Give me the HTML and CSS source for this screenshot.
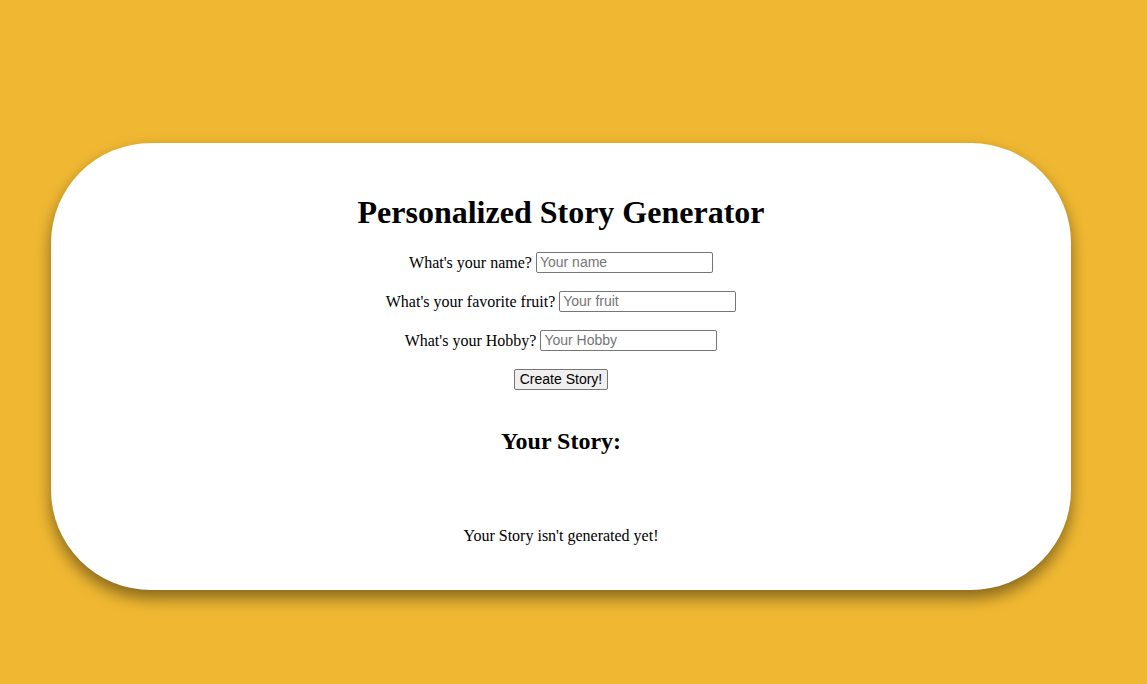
FILE: index.html
```html
<!DOCTYPE html>
<html>
<head>
<meta charset="utf-8">
<title>Personalized Story Generator</title>
<link rel="stylesheet" href="styles.css">
</head>
<body>
<div class="card">
  <h1 class="title">Personalized Story Generator</h1>
  <p class="row"><label>What's your name?</label> <input type="text" placeholder="Your name"></p>
  <p class="row"><label>What's your favorite fruit?</label> <input type="text" placeholder="Your fruit"></p>
  <p class="row row-last"><label>What's your Hobby?</label> <input type="text" placeholder="Your Hobby"></p>
  <p class="row"><button type="button">Create Story!</button></p>
  <h2 class="subtitle">Your Story:</h2>
  <p class="story">Your Story isn't generated yet!</p>
</div>
</body>
</html>
```

FILE: styles.css
```css
html, body {
  margin: 0;
  padding: 0;
}
body {
  background: #f0b832;
  font-family: "Liberation Serif", "Times New Roman", serif;
  font-size: 16px;
  color: #000;
  height: 684px;
  overflow: hidden;
}
.card {
  box-sizing: border-box;
  width: 1020px;
  height: 447px;
  margin: 143px 0 0 51px;
  background: #fff;
  border-radius: 100px;
  box-shadow: 0 8px 16px rgba(0, 0, 0, 0.45);
  padding-top: 51px;
  text-align: center;
}
.title {
  font-size: 32px;
  font-weight: bold;
  line-height: 37px;
  margin: 0 0 20px;
}
.row {
  margin: 0 0 16px;
  line-height: 23px;
  height: 23px;
}
.row-last {
  margin-bottom: 14px;
}
.row input {
  font-family: Arial, "Liberation Sans", sans-serif;
  font-size: 14px;
  width: 177px;
  height: 21px;
  box-sizing: border-box;
  border: 1px solid #767676;
  border-radius: 2px;
  padding: 1px 3px;
  vertical-align: 1px;
}
.row input::placeholder {
  color: #757575;
}
.row button {
  font-family: Arial, "Liberation Sans", sans-serif;
  font-size: 14px;
  height: 21px;
  width: 94px;
  box-sizing: border-box;
  padding: 1px 4px;
  border: 1px solid #767676;
  border-radius: 2px;
  background: #efefef;
  color: #000;
  vertical-align: middle;
}
.subtitle {
  font-size: 24px;
  font-weight: bold;
  line-height: 28px;
  margin: 38px 0 0;
}
.story {
  margin: 71px 0 0;
  line-height: 19px;
}
```
